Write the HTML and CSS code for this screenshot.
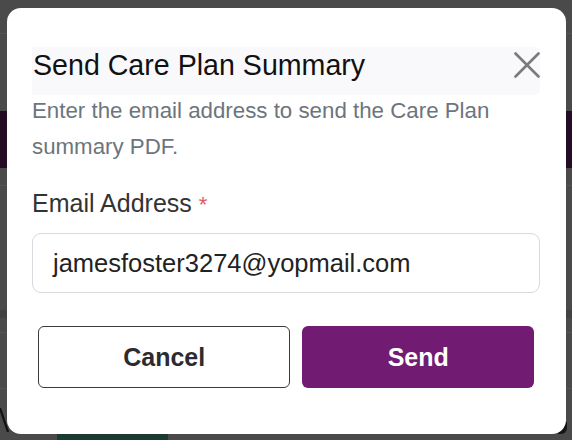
FILE: index.html
```html
<!DOCTYPE html>
<html lang="en">
<head>
<meta charset="utf-8">
<title>Send Care Plan Summary</title>
<link rel="stylesheet" href="styles.css">
</head>
<body>
<div class="page">
  <div class="backdrop">
    <div class="band b1"></div>
    <div class="line"></div>
    <div class="band b2"></div>
    <div class="band purple"></div>
    <div class="band b3"></div>
    <div class="line"></div>
    <div class="band b4"></div>
    <div class="band dark"></div>
    <div class="band b5"></div>
    <div class="line"></div>
    <div class="band b6"></div>
    <div class="line"></div>
    <div class="band b7"></div>
    <div class="foot"><span class="green"></span></div>
  </div>
  <svg class="glyph" width="10" height="30" viewBox="0 0 10 30"><path d="M0 2 L8 26" stroke="#111" stroke-width="2.2" fill="none"/></svg>
  <span class="blob"></span>

  <div class="modal" role="dialog">
    <div class="header">
      <h2 class="title">Send Care Plan Summary</h2>
      <button class="close" aria-label="Close">
        <svg width="26" height="26" viewBox="0 0 26 26"><path d="M1.5 1.5 L24.5 24.5 M24.5 1.5 L1.5 24.5" stroke="#7a7a7a" stroke-width="2.6" stroke-linecap="round" fill="none"/></svg>
      </button>
    </div>
    <p class="desc">Enter the email address to send the Care Plan summary PDF.</p>
    <label class="label" for="email">Email Address <span class="req">*</span></label>
    <div class="input" id="email">jamesfoster3274@yopmail.com</div>
    <div class="actions">
      <button class="btn cancel">Cancel</button>
      <button class="btn send">Send</button>
    </div>
  </div>
</div>
</body>
</html>
```

FILE: styles.css
```css
* { box-sizing: border-box; }
html, body { margin: 0; padding: 0; }
body {
  background: #4a4a4a;
  font-family: "Liberation Sans", Arial, Helvetica, sans-serif;
}
.page {
  position: relative;
  width: 572px;
  height: 440px;
  overflow: hidden;
}
.backdrop {
  display: flex;
  flex-direction: column;
  height: 440px;
}
.band { background: #4a4a4a; }
.line { height: 1px; background: #555555; }
.b1 { height: 33px; }
.b2 { height: 77px; }
.purple { height: 57px; background: #240c25; }
.b3 { height: 17px; }
.b4 { height: 124px; }
.dark { height: 8px; background: #424242; }
.b5 { height: 14px; }
.b6 { height: 55px; }
.b7 { height: 43px; }
.foot {
  flex: 1;
  background: #4a4a4a;
  padding-left: 57px;
  display: flex;
}
.green { width: 111px; background: #1b3a32; }
.glyph { position: absolute; left: 0; top: 406px; }
.blob {
  position: absolute;
  left: 558px;
  top: 422px;
  width: 9px;
  height: 12px;
  background: #151515;
  border-radius: 0 0 6px 0;
}

.modal {
  position: absolute;
  left: 7px;
  top: 8px;
  width: 559px;
  height: 426px;
  background: #ffffff;
  border-radius: 14px;
  padding: 39px 26px 0 25px;
  display: flex;
  flex-direction: column;
}
.header {
  display: flex;
  justify-content: space-between;
  align-items: flex-start;
  height: 48px;
  background: #f9f9fb;
  border-radius: 0 5px 5px 0;
}
.title {
  margin: 0 0 0 1px;
  padding-top: 2px;
  font-size: 28.6px;
  font-weight: 400;
  line-height: 33px;
  color: #111111;
}
.close {
  margin: 5px 0 0 0;
  padding: 0;
  border: 0;
  background: transparent;
  width: 26px;
  height: 26px;
  display: flex;
}
.desc {
  margin: -2px 0 0 0;
  font-size: 22.3px;
  line-height: 36px;
  color: #6c757d;
}
.label {
  margin-top: 24px;
  font-size: 25px;
  line-height: 29px;
  color: #333333;
}
.req { color: #e05a5e; font-size: 22px; }
.input {
  margin-top: 14px;
  height: 60px;
  border: 1px solid #d6d9de;
  border-radius: 9px;
  padding: 0 0 0 20px;
  display: flex;
  align-items: center;
  font-size: 25.5px;
  color: #222222;
}
.actions {
  margin: 33px 6px 0 6px;
  display: flex;
  gap: 12px;
}
.btn {
  height: 62px;
  font-family: inherit;
  font-size: 25px;
  font-weight: 700;
  border-radius: 6px;
  cursor: pointer;
}
.cancel {
  flex: 252 1 0;
  background: #ffffff;
  border: 1px solid #3a3a3a;
  color: #2c2c2e;
}
.send {
  flex: 232 1 0;
  background: #711b73;
  border: 0;
  color: #ffffff;
}
```
